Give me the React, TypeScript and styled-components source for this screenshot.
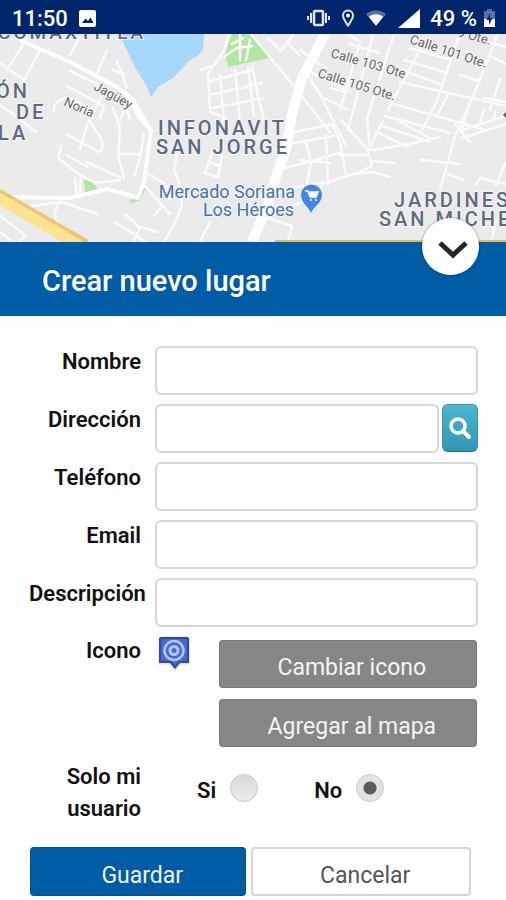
import React, { useState } from "react";
import styled, { createGlobalStyle } from "styled-components";

const GlobalStyle = createGlobalStyle`
  *, *::before, *::after { box-sizing: border-box; }
  body {
    margin: 0;
    background: #fefefe;
    color: #111;
    font-family: Roboto, "Liberation Sans", sans-serif;
    font-size: 22px;
  }
  button, input { font: inherit; }
`;

const Screen = styled.main`
  display: flex;
  flex-direction: column;
`;

const StatusBar = styled.header`
  display: flex;
  align-items: center;
  justify-content: space-between;
  height: 34px;
  padding: 2px 11px 0 12px;
  background: #00256c;
  color: #fff;
  font-size: 22px;
  font-weight: 500;
`;

const StatusGroup = styled.div<{ $gap: number }>`
  display: flex;
  align-items: center;
  gap: ${(p) => p.$gap}px;
  svg { display: block; }
`;

const MapArea = styled.section`
  height: 208px;
  overflow: hidden;
  background: #ebebeb;
`;

const MapDrawing = styled.svg`
  display: block;
  width: 100%;
  height: 100%;
`;

const PanelHeader = styled.div`
  position: relative;
  display: flex;
  align-items: center;
  height: 74px;
  padding: 4px 42px 0;
  background: #005ca5;
  color: #fff;
`;

const Title = styled.h1`
  margin: 0;
  font-size: 29px;
  font-weight: 500;
  line-height: 36px;
`;

const CollapseButton = styled.button`
  position: absolute;
  top: -24px;
  right: 27px;
  display: grid;
  place-items: center;
  width: 57px;
  height: 57px;
  padding: 6px 0 0 4px;
  border: 0;
  border-radius: 50%;
  background: #fff;
  box-shadow: 0 0 3px rgba(0, 0, 0, 0.4);
`;

const Form = styled.form`
  display: flex;
  flex-direction: column;
  padding: 30px 28px 5px 29px;
`;

const Row = styled.div<{ $space?: number }>`
  display: grid;
  grid-template-columns: 112px minmax(0, 1fr);
  column-gap: 14px;
  margin-bottom: ${(p) => p.$space ?? 9}px;
`;

const Label = styled.label`
  font-weight: 600;
  line-height: 32px;
  text-align: right;
`;

const GroupLabel = styled.span`
  font-weight: 600;
  line-height: 32px;
  text-align: right;
`;

const Field = styled.input`
  display: block;
  width: 100%;
  min-width: 0;
  height: 49px;
  padding: 0 12px;
  border: 2px solid #d6d6d6;
  border-radius: 6px;
  background: #fff;
  outline: none;
`;

const FieldGroup = styled.div`
  display: flex;
  gap: 3px;
`;

const SearchButton = styled.button`
  display: grid;
  flex: none;
  place-items: center;
  width: 36px;
  height: 48px;
  padding: 0;
  border: 1px solid #3392b0;
  border-bottom-color: #1f7390;
  border-radius: 6px;
  background: linear-gradient(#4fb6d0, #2f96b4);
`;

const IconChoice = styled.div`
  display: flex;
  justify-content: space-between;
  padding: 1px 1px 0 3px;
`;

const ActionStack = styled.div`
  display: flex;
  flex-direction: column;
  gap: 11px;
  width: 81%;
  padding-top: 4px;
`;

const Button = styled.button<{ $kind: "grey" | "primary" | "plain" }>`
  height: ${(p) => (p.$kind === "grey" ? 48 : 49)}px;
  padding: 8px 0 0 8px;
  border: ${(p) => (p.$kind === "plain" ? "2px solid #d6d6d6" : "1px solid rgba(0, 0, 0, 0.1)")};
  border-radius: 4px;
  background: ${(p) => ({ grey: "#868686", primary: "#005ca5", plain: "#fff" })[p.$kind]};
  color: ${(p) => (p.$kind === "plain" ? "#555" : "#f4f4f4")};
  font-size: 23px;
  line-height: 28px;
`;

const RadioGroup = styled.div`
  display: flex;
  gap: 56px;
  padding: 11px 0 0 42px;
`;

const RadioLabel = styled.label`
  display: flex;
  align-items: flex-start;
  gap: 14px;
  height: 32px;
  font-weight: 600;
  line-height: 38px;
`;

const Radio = styled.input`
  appearance: none;
  width: 28px;
  height: 28px;
  margin: 2px 0 0;
  border: 1px solid #cbcbcb;
  border-radius: 50%;
  background: linear-gradient(#d9d9d9, #ececec);
  &:checked {
    background: radial-gradient(circle, #5c5c5c 6px, #e2e2e2 7px);
  }
`;

const Footer = styled.div`
  display: grid;
  grid-template-columns: 72fr 73fr;
  gap: 5px;
  padding: 0 7px 0 1px;
`;

const roads = [
  "M0 63L24 80", "M24 80L40 50", "M7 70L27 38", "M70 55L80 37", "M97 73L107 50",
  "M117 62L127 87", "M113 70L124 74", "M70 71L97 84", "M67 86L104 106L100 118",
  "M54 111C54 102 60 98 70 98L95 112", "M0 105L18 118L36 132", "M90 117L103 94", "M120 120L126 106L130 120",
  "M113 108L120 128L118 155L124 178", "M119 154L139 154", "M144 134L140 158L134 176",
  "M89 120L100 137Q106 149 99 152L66 134", "M80 149L88 122", "M61 146L58 158L77 173L95 183L120 180",
  "M86 162L120 177", "M66 155L88 167", "M81 175L80 197", "M75 178L77 197",
  "M24 207L62 202L97 214", "M62 198L54 213L59 226", "M145 172L165 184L170 200",
  "M145 186L170 214", "M162 206L154 216", "M178 150L174 170L180 185L182 205L174 225L164 242",
  "M115 222L137 236L145 242", "M125 214L140 228L133 242", "M137 226L158 232", "M0 216L25 235L20 242",
  "M0 232L10 240", "M210 222L200 242", "M213 150L222 156L218 177L205 173Z", "M209 162L219 166",
  "M211 66L200 70M218 60L208 73L210 112L225 118M220 75L224 122M235 70L240 122M208 82L252 70M210 95L262 83M212 108L264 98M248 67L254 116M218 60L224 50L229 34",
  "M251 34L292 84L330 132", "M252 65L258 96L264 120", "M268 38L281 51L293 35M287 42L300 56M300 50L326 68",
  "M306 72L322 98L346 146M310 72L350 92M322 97L348 110",
  "M348 34L360 42L340 110M373 34L348 130M394 34L367 118L370 150",
  "M350 44L380 53M330 88L345 92M404 60L444 72M410 48L448 59M402 70L440 84M400 82L506 106M390 103L486 130M385 116L450 133M383 126L430 142",
  "M424 42L388 110M460 34L436 103L422 130M498 34L475 92L455 136L440 190M459 75L480 81M448 94L438 114M500 79L490 110M484 98L506 102",
  "M468 108L462 130L506 116M484 108L480 124M495 112L494 120M470 37L506 47M490 56L506 64",
  "M295 132L332 124L340 142L346 175L373 172L390 177M288 144L334 136M282 169L340 153M278 190L328 182L350 175M306 142L311 162L307 183M326 135L328 185M300 160L330 163",
  "M341 120L368 150M383 120L368 152L372 166L355 174M372 150L410 144L440 137M376 132L408 147M400 122L430 138M372 161L394 163M368 155L340 155",
  "M421 160L460 164M448 174L464 180M455 124L470 142M506 124L462 138M476 185L480 178L506 184M496 185L506 162M492 238L496 220",
  "M268 218L292 226M292 226L288 242M294 205L310 200L323 184",
];

const CityMap = () => (
  <MapDrawing viewBox="0 34 506 208" preserveAspectRatio="xMidYMid slice" role="img" aria-label="Mapa">
    <rect y="34" width="506" height="208" fill="#ebebeb" />
    <path d="M119 34L204 34L203 50Q198 57 190 60L173 78L158 87L151 97L147 87L135 67Z" fill="#a5d8fb" />
    <path d="M232 34L252 34L270 58L228 67L225 53Z" fill="#b5e5a2" />
    <path d="M84 180L90 179L98 189L96 193L85 194Z" fill="#b5e5a2" />
    <path d="M130 202L138 199L144 188" fill="none" stroke="#b5e5a2" strokeWidth="4" />
    <g fill="none" stroke="#fbfbfb" strokeWidth="2.5" strokeLinejoin="round" strokeLinecap="round">
      {roads.map((d) => <path key={d} d={d} />)}
      <path d="M225 56L237 48L252 46M240 34L240 60M250 40L246 60M232 44L243 38" />
    </g>
    <g fill="none" stroke="#fff" strokeLinejoin="round">
      <path d="M20 40L70 62L117 87L133 100L150 130" strokeWidth="4" />
      <path d="M0 197L70 198L107 189L138 198L144 182L151 130L140 118L128 98" strokeWidth="4" />
      <path d="M325 34L302 78L292 114L286 150L276 176L268 204L252 242" strokeWidth="10" />
    </g>
    <path d="M-5 194L85 246" fill="none" stroke="#eac675" strokeWidth="14" />
    <path d="M-5 196L80 246" fill="none" stroke="#fbe38f" strokeWidth="11" />
    <path d="M275 241L506 241" stroke="#ddbd5e" strokeWidth="2" />
    <g fill="#5e6a80" fontSize="20" fontWeight="500" letterSpacing="3" stroke="#f5f5f5" strokeWidth="2" paintOrder="stroke">
      <text x="-2" y="39" fontSize="19">COMAXTITLA</text>
      <text x="-4" y="98">ÓN</text>
      <text x="16" y="119">DE</text>
      <text x="-2" y="140">LA</text>
      <text x="158" y="135">INFONAVIT</text>
      <text x="156" y="154">SAN JORGE</text>
      <text x="394" y="207">JARDINES</text>
      <text x="379" y="226">SAN MICHE</text>
    </g>
    <g fill="#666" fontSize="13" stroke="#f5f5f5" strokeWidth="2" paintOrder="stroke">
      <text transform="translate(93 89) rotate(29)">Jagüey</text>
      <text transform="translate(63 105) rotate(24)">Noria</text>
      <text transform="translate(330 57) rotate(16)">Calle 103 Ote</text>
      <text transform="translate(317 77) rotate(17)">Calle 105 Ote.</text>
      <text transform="translate(409 43) rotate(18)">Calle 101 Ote.</text>
      <text transform="translate(457 36) rotate(15)">9 Ote.</text>
    </g>
    <g fill="#4773ad" fontSize="18" textAnchor="end" stroke="#f5f5f5" strokeWidth="2" paintOrder="stroke">
      <text x="295" y="198">Mercado Soriana</text>
      <text x="294" y="216">Los Héroes</text>
    </g>
    <path d="M311 213C309 207 301 203 301 195A10.500 10.500 0 0 1 322 195C322 203 313 207 311 213Z" fill="#4286ec" />
    <path d="M305 191H308L310 197H316L318 192H309" fill="#fff" stroke="#fff" strokeWidth="1.500" />
    <circle cx="311" cy="200" r="1" fill="#fff" />
    <circle cx="316" cy="200" r="1" fill="#fff" />
    <path d="M506 112L503 115L506 118" fill="#5e6679" />
  </MapDrawing>
);

const PictureIcon = () => (
  <svg width="17" height="17" viewBox="0 0 17 17" aria-hidden="true">
    <rect width="17" height="17" rx="2" fill="#fff" />
    <path d="M3 13L6.500 8.500L9 11L11.500 7.500L14.500 13Z" fill="#00256c" />
  </svg>
);

const VibrateIcon = () => (
  <svg width="23" height="18" viewBox="0 0 23 18" fill="none" stroke="#dfe6f2" strokeWidth="2" aria-hidden="true">
    <rect x="7" y="2" width="9" height="14" rx="1" strokeWidth="2.500" />
    <path d="M4 4V14M19 4V14M1 7V11M22 7V11" />
  </svg>
);

const PlaceIcon = () => (
  <svg width="12" height="18" viewBox="1 0 12 18" fill="none" stroke="#dfe6f2" strokeWidth="2" aria-hidden="true">
    <path d="M7 16.500C4 12 2 9.500 2 6.500A5 5 0 0 1 12 6.500C12 9.500 10 12 7 16.500Z" />
    <circle cx="7" cy="6.500" r="2" fill="#fff" stroke="none" />
  </svg>
);

const WifiIcon = () => (
  <svg width="20" height="16" viewBox="0 0 22 17" aria-hidden="true">
    <path d="M0 4Q11 -4 22 4L11 17Z" fill="#5671a3" />
    <path d="M3 7Q11 2 19 7L11 17Z" fill="#fff" />
  </svg>
);

const SignalIcon = () => (
  <svg width="22" height="19" viewBox="0 0 22 19" aria-hidden="true">
    <path d="M0 19L22 0V19Z" fill="#fff" />
  </svg>
);

const BatteryIcon = () => (
  <svg width="11" height="18" viewBox="0 0 11 18" aria-hidden="true">
    <path d="M3 0H8V2H11V18H0V2H3Z" fill="#5671a3" />
    <path d="M0 10H11V18H0Z" fill="#fff" />
    <path d="M6 4L2.500 11H5V16L8.500 9H6Z" fill="#00256c" />
  </svg>
);

const ChevronIcon = () => (
  <svg width="30" height="20" viewBox="0 0 30 20" fill="none" stroke="#262626" strokeWidth="5" aria-hidden="true">
    <path d="M2 3L15 15L28 3" />
  </svg>
);

const SearchIcon = () => (
  <svg width="22" height="22" viewBox="0 0 22 22" fill="none" stroke="#fff" aria-hidden="true">
    <circle cx="9" cy="9" r="7" strokeWidth="3.500" />
    <path d="M14 14L20 20" strokeWidth="4" strokeLinecap="round" />
  </svg>
);

const PlaceMarker = () => (
  <svg width="32" height="35" viewBox="0 0 32 35" role="img" aria-label="Icono del lugar">
    <path d="M3 2H29Q31 2 31 4V27H22L17 33L12 27H2V4Q2 2 3 2Z" fill="none" stroke="#e4e0dc" strokeWidth="3" />
    <path d="M3 2H29Q30 2 30 3V26H21.500L17 31.500L12.500 26H2V3Q2 2 3 2Z" fill="#4169e0" stroke="#3c4c82" strokeWidth="2" />
    <circle cx="16" cy="14.500" r="9.500" fill="none" stroke="#b6c8ff" strokeWidth="2.500" />
    <circle cx="16" cy="14.500" r="4" fill="#4169e0" stroke="#b6c8ff" strokeWidth="3" />
  </svg>
);

export default function App() {
  const [onlyMe, setOnlyMe] = useState(false);

  return (
    <>
      <GlobalStyle />
      <Screen>
        <StatusBar>
          <StatusGroup $gap={11}>
            <span>11:50</span>
            <PictureIcon />
          </StatusGroup>
          <StatusGroup $gap={10}>
            <StatusGroup $gap={12}>
              <VibrateIcon />
              <PlaceIcon />
              <WifiIcon />
              <SignalIcon />
            </StatusGroup>
            <StatusGroup $gap={7}>
              <span>49 %</span>
              <BatteryIcon />
            </StatusGroup>
          </StatusGroup>
        </StatusBar>

        <MapArea>
          <CityMap />
        </MapArea>

        <PanelHeader>
          <Title>Crear nuevo lugar</Title>
          <CollapseButton type="button" aria-label="Contraer">
            <ChevronIcon />
          </CollapseButton>
        </PanelHeader>

        <Form onSubmit={(e) => e.preventDefault()}>
          <Row>
            <Label htmlFor="nombre">Nombre</Label>
            <Field id="nombre" />
          </Row>
          <Row>
            <Label htmlFor="direccion">Dirección</Label>
            <FieldGroup>
              <Field id="direccion" />
              <SearchButton type="button" aria-label="Buscar">
                <SearchIcon />
              </SearchButton>
            </FieldGroup>
          </Row>
          <Row>
            <Label htmlFor="telefono">Teléfono</Label>
            <Field id="telefono" type="tel" />
          </Row>
          <Row>
            <Label htmlFor="email">Email</Label>
            <Field id="email" type="email" />
          </Row>
          <Row $space={8}>
            <Label htmlFor="descripcion">Descripción</Label>
            <Field id="descripcion" />
          </Row>
          <Row $space={14}>
            <GroupLabel>Icono</GroupLabel>
            <IconChoice>
              <PlaceMarker />
              <ActionStack>
                <Button type="button" $kind="grey">Cambiar icono</Button>
                <Button type="button" $kind="grey">Agregar al mapa</Button>
              </ActionStack>
            </IconChoice>
          </Row>
          <Row $space={22} role="radiogroup" aria-labelledby="solo">
            <GroupLabel id="solo">Solo mi usuario</GroupLabel>
            <RadioGroup>
              <RadioLabel>
                Si
                <Radio type="radio" name="solo" checked={onlyMe} onChange={() => setOnlyMe(true)} />
              </RadioLabel>
              <RadioLabel>
                No
                <Radio type="radio" name="solo" checked={!onlyMe} onChange={() => setOnlyMe(false)} />
              </RadioLabel>
            </RadioGroup>
          </Row>
          <Footer>
            <Button type="submit" $kind="primary">Guardar</Button>
            <Button type="button" $kind="plain">Cancelar</Button>
          </Footer>
        </Form>
      </Screen>
    </>
  );
}
